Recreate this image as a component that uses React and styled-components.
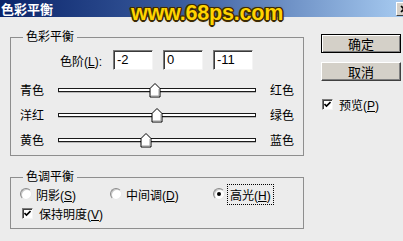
import styled, { createGlobalStyle } from "styled-components";

const GlobalStyle = createGlobalStyle`
  html, body {
    margin: 0;
    padding: 0;
  }
  body {
    width: 403px;
    height: 241px;
    overflow: hidden;
    background: #ececec;
    font-family: "Liberation Sans", "Noto Sans CJK SC", sans-serif;
    font-size: 12px;
    color: #000;
  }
`;

const Dialog = styled.div`
  position: relative;
  width: 403px;
  height: 241px;
  overflow: hidden;
  display: flex;
  flex-direction: column;
  background: #ececec;
`;

const TitleBar = styled.div`
  height: 17px;
  flex-shrink: 0;
  display: flex;
  align-items: center;
  justify-content: space-between;
  padding-left: 1px;
  background: linear-gradient(to right, #0a246a 0%, #3a5c9e 45%, #a6caf0 100%);
  color: #fff;
  font-family: "Noto Sans CJK SC", sans-serif;
  font-weight: bold;
  font-size: 13px;
  line-height: 17px;
`;

const CloseBtn = styled.div`
  width: 14px;
  height: 12px;
  margin-right: -9px;
  flex-shrink: 0;
  background: #d4d0c8;
  border: 1px solid;
  border-color: #fff #404040 #404040 #fff;
  display: flex;
  align-items: center;
  justify-content: center;
`;

const Watermark = styled.div`
  position: absolute;
  left: 131px;
  top: 1px;
  font-family: "Liberation Sans", sans-serif;
  font-weight: bold;
  font-size: 21.5px;
  line-height: 24px;
  letter-spacing: -0.2px;
  color: #ffd400;
  text-shadow: -1.5px 0 #3d2b04, 1.5px 0 #3d2b04, 0 -1.5px #3d2b04, 0 1.5px #3d2b04,
    -1px -1px #3d2b04, 1px 1px #3d2b04, -1px 1px #3d2b04, 1px -1px #3d2b04,
    0 0 3px #7a5a10;
`;

const Body = styled.div`
  flex: 1;
  display: flex;
  padding: 13px 0 0 10px;
  gap: 17px;
`;

const LeftCol = styled.div`
  width: 294px;
  display: flex;
  flex-direction: column;
  gap: 14px;
`;

const Group = styled.fieldset`
  margin: 0;
  min-width: 0;
  padding: ${(p) => p.$pt}px 0 ${(p) => p.$pb}px 0;
  border: 1px solid #8e8e8e;
`;

const Legend = styled.legend`
  margin-left: 12px;
  padding: 0 3px;
  line-height: 14px;
  font-size: 12px;
`;

const LevelRow = styled.div`
  display: flex;
  align-items: center;
  height: 20px;
  padding-left: 49px;
  gap: 10px;
`;

const LevelLabel = styled.span`
  width: 43px;
  font-size: 12px;
`;

const Field = styled.div`
  width: 40px;
  height: 20px;
  box-sizing: border-box;
  background: #fff;
  border: 1px solid;
  border-color: #7a7a7a #f4f4f4 #f4f4f4 #7a7a7a;
  box-shadow: inset 1px 1px 0 #3a3a3a;
  padding-left: 3px;
  font-size: 13px;
  line-height: 18px;
`;

const Sliders = styled.div`
  margin-top: 7px;
  display: flex;
  flex-direction: column;
`;

const SliderRow = styled.div`
  height: 25px;
  display: flex;
  align-items: center;
  padding-left: 9px;
`;

const SideLabel = styled.span`
  width: ${(p) => p.$w}px;
  flex-shrink: 0;
  margin-left: ${(p) => p.$ml || 0}px;
`;

const Track = styled.div`
  position: relative;
  width: 198px;
  flex-shrink: 0;
  height: 4px;
  box-sizing: border-box;
  border: 1px solid #1a1a1a;
  background: #fff;
  box-shadow: 0 1px 0 #b8b8b8;
`;

const Thumb = styled.svg`
  position: absolute;
  top: -6px;
  width: 12px;
  height: 15px;
`;

const Radios = styled.div`
  height: 16px;
  display: flex;
  align-items: center;
  padding-left: 9px;
`;

const RadioItem = styled.div`
  width: ${(p) => p.$w}px;
  display: flex;
  align-items: center;
  gap: 4px;
`;

const RadioCircle = styled.span`
  width: 12px;
  height: 12px;
  box-sizing: border-box;
  border-radius: 50%;
  background: #fff;
  border: 1px solid;
  border-color: #8a8a8a #e8e8e8 #e8e8e8 #8a8a8a;
  box-shadow: inset 1px 1px 0 #c8c8c8;
  display: flex;
  align-items: center;
  justify-content: center;
  &::after {
    content: "";
    width: 4px;
    height: 4px;
    border-radius: 50%;
    background: ${(p) => (p.$on ? "#000" : "transparent")};
  }
`;

const Focus = styled.span`
  outline: 1px dotted #000;
  outline-offset: 1px;
  padding: 0 1px;
`;

const CheckRow = styled.div`
  height: 16px;
  display: flex;
  align-items: center;
  gap: 6px;
  padding-left: ${(p) => p.$pl}px;
  margin-top: ${(p) => p.$mt || 0}px;
`;

const Box = styled.span`
  width: 11px;
  height: 11px;
  box-sizing: border-box;
  background: #fff;
  border: 1px solid;
  border-color: #7a7a7a #f4f4f4 #f4f4f4 #7a7a7a;
  box-shadow: inset 1px 1px 0 #404040;
  display: flex;
  align-items: center;
  justify-content: center;
`;

const RightCol = styled.div`
  margin-top: 4px;
  width: 80px;
  display: flex;
  flex-direction: column;
  gap: 9px;
`;

const Button = styled.div`
  height: 19px;
  box-sizing: border-box;
  background: #d4d0c8;
  border: 1px solid;
  border-color: ${(p) => (p.$def ? "#000" : "#fff #404040 #404040 #fff")};
  box-shadow: ${(p) =>
    p.$def
      ? "inset 1px 1px 0 #fff, inset -1px -1px 0 #808080"
      : "inset -1px -1px 0 #808080"};
  display: flex;
  align-items: center;
  justify-content: center;
  font-family: "Noto Sans CJK SC", sans-serif;
  font-size: 13px;
`;

const Tick = () => (
  <svg width="7" height="7" viewBox="0 0 7 7">
    <path d="M0.5 3 L2.5 5 L6.5 1" fill="none" stroke="#000" strokeWidth="1.6" />
  </svg>
);

const sliders = [
  ["青色", "红色", -2],
  ["洋红", "绿色", 0],
  ["黄色", "蓝色", -11],
];

const Slider = ({ left, right, value }) => {
  const x = ((value + 100) / 200) * 196 - 6;
  return (
    <SliderRow>
      <SideLabel $w={38}>{left}</SideLabel>
      <Track>
        <Thumb viewBox="0 0 12 15" style={{ left: x }}>
          <path d="M6 0.5 L11 5.5 L11 14 L1 14 L1 5.5 Z" fill="#fff" stroke="#000" />
          <path d="M10 6 L10 13 L2 13" fill="none" stroke="#9a9a9a" />
        </Thumb>
      </Track>
      <SideLabel $w={26} $ml={14}>
        {right}
      </SideLabel>
    </SliderRow>
  );
};

const App = () => {
  return (
    <>
      <GlobalStyle />
      <Dialog>
        <TitleBar>
          <span>色彩平衡</span>
          <CloseBtn>
            <svg width="8" height="8" viewBox="0 0 8 8">
              <path d="M1 1 L7 7 M7 1 L1 7" stroke="#000" strokeWidth="1.6" />
            </svg>
          </CloseBtn>
        </TitleBar>
        <Body>
          <LeftCol>
            <Group $pt={6} $pb={3}>
              <Legend>色彩平衡</Legend>
              <LevelRow>
                <LevelLabel>
                  色阶(<u>L</u>):
                </LevelLabel>
                <Field>-2</Field>
                <Field>0</Field>
                <Field>-11</Field>
              </LevelRow>
              <Sliders>
                {sliders.map(([l, r, v]) => (
                  <Slider key={l} left={l} right={r} value={v} />
                ))}
              </Sliders>
            </Group>
            <Group $pt={2} $pb={7}>
              <Legend>色调平衡</Legend>
              <Radios>
                <RadioItem $w={90}>
                  <RadioCircle />
                  <span>
                    阴影(<u>S</u>)
                  </span>
                </RadioItem>
                <RadioItem $w={103}>
                  <RadioCircle />
                  <span>
                    中间调(<u>D</u>)
                  </span>
                </RadioItem>
                <RadioItem $w={70}>
                  <RadioCircle $on />
                  <Focus>
                    高光(<u>H</u>)
                  </Focus>
                </RadioItem>
              </Radios>
              <CheckRow $pl={11} $mt={3}>
                <Box>
                  <Tick />
                </Box>
                <span>
                  保持明度(<u>V</u>)
                </span>
              </CheckRow>
            </Group>
          </LeftCol>
          <RightCol>
            <Button $def>确定</Button>
            <Button>取消</Button>
            <CheckRow $pl={1} $mt={6}>
              <Box>
                <Tick />
              </Box>
              <span>
                预览(<u>P</u>)
              </span>
            </CheckRow>
          </RightCol>
        </Body>
        <Watermark>www.68ps.com</Watermark>
      </Dialog>
    </>
  );
};

export default App;
